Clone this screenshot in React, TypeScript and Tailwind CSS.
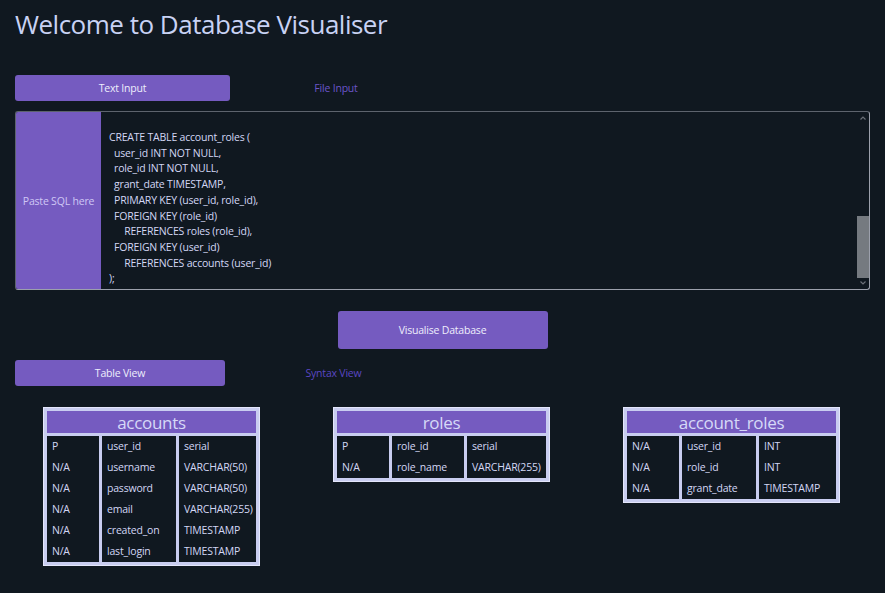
import React from "react";

const font = { fontFamily: '"Open Sans", "Noto Sans", sans-serif' };

type Row = [string, string, string];

function DbTable({ name, rows, w1, w2 }: { name: string; rows: Row[]; w1: string; w2: string }) {
  return (
    <div className="w-[217px] bg-[#c9cdf0] p-[3px] flex flex-col gap-[3px] border border-[#e4e6fb]">
      <div className="h-[22px] bg-[#755bc0] flex items-center justify-center text-[17px] leading-none tracking-[-0.3px] text-[#d6d9f7]">
        {name}
      </div>
      <div className="flex gap-[3px]">
        {[0, 1, 2].map((c) => (
          <div
            key={c}
            className={`bg-[#101820] flex flex-col ${c === 0 ? w1 : c === 1 ? w2 : "flex-1"}`}
          >
            {rows.map((r, i) => (
              <div key={i} className="h-[21px] flex items-center pl-[5px] text-[10.5px] tracking-[-0.2px] text-[#d3d7f5] whitespace-nowrap">
                {r[c]}
              </div>
            ))}
          </div>
        ))}
      </div>
    </div>
  );
}

const sql = `CREATE TABLE account_roles (
  user_id INT NOT NULL,
  role_id INT NOT NULL,
  grant_date TIMESTAMP,
  PRIMARY KEY (user_id, role_id),
  FOREIGN KEY (role_id)
      REFERENCES roles (role_id),
  FOREIGN KEY (user_id)
      REFERENCES accounts (user_id)
);`;

export default function App() {
  return (
    <div className="min-h-[593px] w-full bg-[#101820] text-[#d3d7f5] px-[15px] pt-[6px]" style={font}>
      <h1 className="text-[26px] leading-[36px] tracking-[-0.5px] text-[#c8d2f4] font-normal">Welcome to Database Visualiser</h1>

      <div className="flex items-center mt-[33px] h-[26px] text-[10.5px] tracking-[-0.2px]">
        <div className="w-[215px] h-[26px] pt-[2px] bg-[#755bc0] rounded-[3px] flex items-center justify-center text-[#eeeefc]">
          Text Input
        </div>
        <div className="w-[212px] pt-[2px] text-center text-[#6b55c9]">File Input</div>
      </div>

      <div className="mt-[10px] h-[179px] flex rounded-[3px] border border-[#9ca0ac] border-t-[#5d636d] border-l-[#5d636d] text-[10.5px] tracking-[-0.2px]">
        <div className="w-[85px] pt-[2px] bg-[#755bc0] rounded-l-[2px] flex items-center justify-center text-[#cfc7f5]">
          Paste SQL here
        </div>
        <div className="flex-1 relative">
          <pre className="pl-[8px] pt-[18px] leading-[15.7px] text-[#d3d7f5] whitespace-pre" style={font}>
            {sql}
          </pre>
          <div className="absolute right-0 top-0 bottom-0 w-[12px] flex flex-col items-center">
            <svg width="8" height="8" viewBox="0 0 8 8" className="mt-[2px]">
              <path d="M1.5 5.5 L4 3 L6.5 5.5" stroke="#6b7078" strokeWidth="1.2" fill="none" />
            </svg>
            <div className="flex-1" />
            <div className="w-[12px] h-[62px] bg-[#757a80]" />
            <svg width="8" height="8" viewBox="0 0 8 8" className="mt-[1px] mb-[2px]">
              <path d="M1.5 2.5 L4 5 L6.5 2.5" stroke="#6b7078" strokeWidth="1.2" fill="none" />
            </svg>
          </div>
        </div>
      </div>

      <div className="flex justify-center mt-[21px] text-[10.5px] tracking-[-0.2px]">
        <div className="w-[210px] h-[38px] pt-[2px] bg-[#755bc0] rounded-[3px] flex items-center justify-center text-[#eeeefc]">
          Visualise Database
        </div>
      </div>

      <div className="flex items-center mt-[11px] h-[26px] text-[10.5px] tracking-[-0.2px]">
        <div className="w-[210px] h-[26px] pt-[2px] bg-[#755bc0] rounded-[3px] flex items-center justify-center text-[#eeeefc]">
          Table View
        </div>
        <div className="w-[217px] pt-[2px] text-center text-[#5b47c2]">Syntax View</div>
      </div>

      <div className="flex items-start mt-[21px] pl-[28px] gap-[73px]">
        <DbTable
          name="accounts"
          w1="w-[52px]"
          w2="w-[74px]"
          rows={[
            ["P", "user_id", "serial"],
            ["N/A", "username", "VARCHAR(50)"],
            ["N/A", "password", "VARCHAR(50)"],
            ["N/A", "email", "VARCHAR(255)"],
            ["N/A", "created_on", "TIMESTAMP"],
            ["N/A", "last_login", "TIMESTAMP"],
          ]}
        />
        <DbTable
          name="roles"
          w1="w-[52px]"
          w2="w-[72px]"
          rows={[
            ["P", "role_id", "serial"],
            ["N/A", "role_name", "VARCHAR(255)"],
          ]}
        />
        <DbTable
          name="account_roles"
          w1="w-[52px]"
          w2="w-[74px]"
          rows={[
            ["N/A", "user_id", "INT"],
            ["N/A", "role_id", "INT"],
            ["N/A", "grant_date", "TIMESTAMP"],
          ]}
        />
      </div>
    </div>
  );
}
